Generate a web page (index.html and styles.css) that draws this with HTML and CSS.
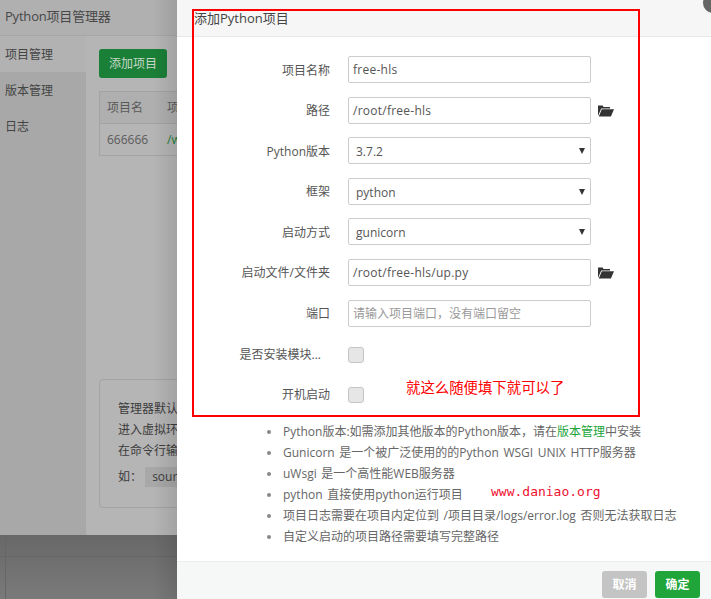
FILE: index.html
```html
<!DOCTYPE html>
<html lang="zh">
<head>
<meta charset="utf-8">
<title>添加Python项目</title>
<link rel="stylesheet" href="styles.css">
</head>
<body>
<div class="backdrop">
  <div class="app">
    <div class="app-title">Python项目管理器</div>
    <div class="app-body">
      <div class="side">
        <div class="side-item active">项目管理</div>
        <div class="side-item">版本管理</div>
        <div class="side-item">日志</div>
      </div>
      <div class="main">
        <div class="add-btn">添加项目</div>
        <div class="table">
          <div class="tr head"><span class="c1">项目名</span><span>项目路径</span></div>
          <div class="tr"><span class="c1">666666</span><span class="link">/www/wwwroot</span></div>
        </div>
        <div class="tip">
          <p>管理器默认安装了虚拟环境</p>
          <p>进入虚拟环境的方法</p>
          <p>在命令行输入以下命令</p>
          <p class="tip-code">如： <code>source bin/activate</code></p>
        </div>
      </div>
    </div>
  </div>
  <div class="desk"></div>
</div>
<div class="drawer">
  <div class="drawer-title">添加Python项目</div>
  <div class="form">
    <div class="row"><label>项目名称</label><div class="field path">free-hls</div></div>
    <div class="row"><label>路径</label><div class="field path">/root/free-hls</div>
      <svg class="folder" viewBox="0 0 16 13"><path d="M0 12V1.5h4.5l1.2 1.4H12v1.6H3.2zM3.8 5.3H16L12.9 12.6H.8z"/></svg></div>
    <div class="row"><label>Python版本</label><div class="field select">3.7.2<i></i></div></div>
    <div class="row"><label>框架</label><div class="field select">python<i></i></div></div>
    <div class="row"><label>启动方式</label><div class="field select">gunicorn<i></i></div></div>
    <div class="row"><label>启动文件/文件夹</label><div class="field path">/root/free-hls/up.py</div>
      <svg class="folder" viewBox="0 0 16 13"><path d="M0 12V1.5h4.5l1.2 1.4H12v1.6H3.2zM3.8 5.3H16L12.9 12.6H.8z"/></svg></div>
    <div class="row"><label>端口</label><div class="field placeholder">请输入项目端口，没有端口留空</div></div>
    <div class="row"><label class="trimmed">是否安装模块...</label><div class="check"></div></div>
    <div class="row"><label>开机启动</label><div class="check"></div></div>
  </div>
  <ul class="notes">
    <li>Python版本:如需添加其他版本的Python版本，请在<b>版本管理</b>中安装</li>
    <li>Gunicorn 是一个被广泛使用的的Python WSGI UNIX HTTP服务器</li>
    <li>uWsgi 是一个高性能WEB服务器</li>
    <li>python 直接使用python运行项目</li>
    <li>项目日志需要在项目内定位到 /项目目录/logs/error.log 否则无法获取日志</li>
    <li>自定义启动的项目路径需要填写完整路径</li>
  </ul>
  <div class="footer">
    <div class="btn cancel">取消</div>
    <div class="btn ok">确定</div>
  </div>
</div>
<div class="close"></div>
<div class="mark"></div>
<div class="say">就这么随便填下就可以了</div>
<div class="site">www.daniao.org</div>
</body>
</html>
```

FILE: styles.css
```css
html, body {
  margin: 0;
  height: 599px;
  overflow: hidden;
}
body {
  display: flex;
  width: 711px;
  position: relative;
  font-family: "Open Sans", "Noto Sans CJK SC", sans-serif;
  font-size: 12px;
  color: #555;
}
.backdrop {
  width: 177px;
  height: 599px;
  overflow: hidden;
  display: flex;
  flex-direction: column;
  background: #6f6f6f;
  position: relative;
}
.backdrop::after {
  content: "";
  position: absolute;
  top: 0;
  right: 0;
  width: 24px;
  height: 100%;
  background: linear-gradient(to right, rgba(0,0,0,0), rgba(0,0,0,.1));
}
.app {
  width: 711px;
  height: 535px;
  background: #b5b5b5;
  display: flex;
  flex-direction: column;
  flex: none;
}
.app-title {
  height: 35px;
  line-height: 33px;
  padding-left: 5px;
  font-size: 13px;
  letter-spacing: -.2px;
  color: #484848;
  background: #b0b0b0;
  border-bottom: 1px solid #a6a6a6;
  flex: none;
}
.app-body {
  display: flex;
  flex: 1;
}
.side {
  width: 86px;
  background: #a8a8a8;
  flex: none;
}
.side-item {
  height: 36px;
  line-height: 37px;
  padding-left: 5px;
  color: #444;
}
.side-item.active {
  background: #b2b2b2;
}
.main {
  padding: 13px 13px 0;
  flex: 1;
  display: flex;
  flex-direction: column;
}
.add-btn {
  width: 68px;
  height: 29px;
  line-height: 29px;
  text-align: center;
  border-radius: 3px;
  background: #1a7f37;
  color: #c8d8c8;
}
.table {
  width: 600px;
  margin-top: 13px;
  border: 1px solid #a3a3a3;
}
.tr {
  height: 31px;
  line-height: 31px;
  padding-left: 7px;
  display: flex;
  color: #5a5a5a;
}
.tr.head {
  background: #afafaf;
  border-bottom: 1px solid #a3a3a3;
}
.c1 {
  width: 60px;
}
.link {
  color: #1a7f37;
}
.tip {
  margin-top: 223px;
  width: 600px;
  height: 129px;
  box-sizing: border-box;
  padding: 18px 18px;
  border: 1px solid #a3a3a3;
  border-radius: 4px;
  color: #3c3c3c;
}
.tip p {
  margin: 0;
  height: 21px;
  line-height: 21px;
}
.tip-code {
  margin-top: 5px !important;
}
.tip code {
  font-family: inherit;
  display: inline-block;
  padding: 0 7px;
  line-height: 20px;
  background: #a8a8a8;
}
.desk {
  flex: 1;
  background:
    linear-gradient(#66666a, #66666a) 0 21px / 100% 1px no-repeat,
    linear-gradient(#666, #666) 5px 0 / 1px 100% no-repeat,
    linear-gradient(#686868, #7a7a7a);
}
.drawer {
  flex: 1;
  height: 599px;
  background: #fff;
  display: flex;
  flex-direction: column;
}
.drawer-title {
  height: 37px;
  line-height: 36px;
  padding-left: 17px;
  box-sizing: border-box;
  background: #f6f6f6;
  border-bottom: 1px solid #e8e8e8;
  flex: none;
  font-size: 13px;
  color: #444;
}
.form {
  padding-top: 19px;
  display: flex;
  flex-direction: column;
  gap: 13.6px;
  height: 375px;
  box-sizing: border-box;
  flex: none;
}
.row {
  display: flex;
  align-items: center;
  height: 27px;
}
.row label {
  width: 153px;
  text-align: right;
  margin-right: 18px;
  color: #555;
  flex: none;
}
.row .trimmed {
  width: 144px;
  margin-right: 27px;
}
.field {
  width: 243px;
  height: 27px;
  box-sizing: border-box;
  border: 1px solid #ccc;
  border-radius: 2px;
  line-height: 25px;
  padding-left: 4px;
  color: #555;
  position: relative;
  flex: none;
}
.path {
  letter-spacing: .25px;
}
.select {
  padding-left: 7px;
  line-height: 27px;
}
.select i {
  position: absolute;
  right: 5px;
  top: 10px;
  border-left: 3px solid transparent;
  border-right: 3px solid transparent;
  border-top: 6px solid #333;
}
.placeholder {
  color: #999;
}
.folder {
  width: 16px;
  height: 13px;
  margin-left: 7px;
  fill: #333;
}
.check {
  width: 16px;
  height: 16px;
  margin-top: 2px;
  box-sizing: border-box;
  border: 1px solid #c4c4c4;
  border-radius: 3px;
  background: #e6e6e6;
}
.notes {
  margin: 0;
  padding: 9px 0 0 106px;
  list-style: none;
  color: #666;
  word-spacing: 1.5px;
  flex: 1;
}
.notes li {
  height: 21px;
  line-height: 21px;
  position: relative;
}
.notes li::before {
  content: "";
  position: absolute;
  left: -16px;
  top: 9px;
  width: 4px;
  height: 4px;
  border-radius: 50%;
  background: #888;
}
.notes b {
  font-weight: 400;
  color: #20a53a;
}
.footer {
  height: 38px;
  box-sizing: border-box;
  background: #f6f8f8;
  border-top: 1px solid #eceeee;
  display: flex;
  justify-content: flex-end;
  gap: 8px;
  padding: 9px 11px 0 0;
  flex: none;
}
.btn {
  width: 45px;
  height: 27px;
  line-height: 27px;
  border-radius: 3px;
  text-align: center;
  color: #fff;
  font-weight: 700;
}
.cancel {
  background: #c4c4c4;
}
.ok {
  background: #20a53a;
}
.close {
  position: absolute;
  left: 703px;
  top: -7px;
  width: 20px;
  height: 20px;
  border-radius: 50%;
  background: #666;
}
.mark {
  position: absolute;
  left: 192px;
  top: 9px;
  width: 448px;
  height: 408px;
  box-sizing: border-box;
  border: 2px solid #f00;
}
.say {
  position: absolute;
  left: 406px;
  top: 378px;
  font-size: 14.4px;
  line-height: 20px;
  color: #f00;
}
.site {
  position: absolute;
  left: 491px;
  top: 483px;
  font-family: "DejaVu Sans Mono", monospace;
  font-size: 13px;
  line-height: 18px;
  color: #f01030;
}
```
